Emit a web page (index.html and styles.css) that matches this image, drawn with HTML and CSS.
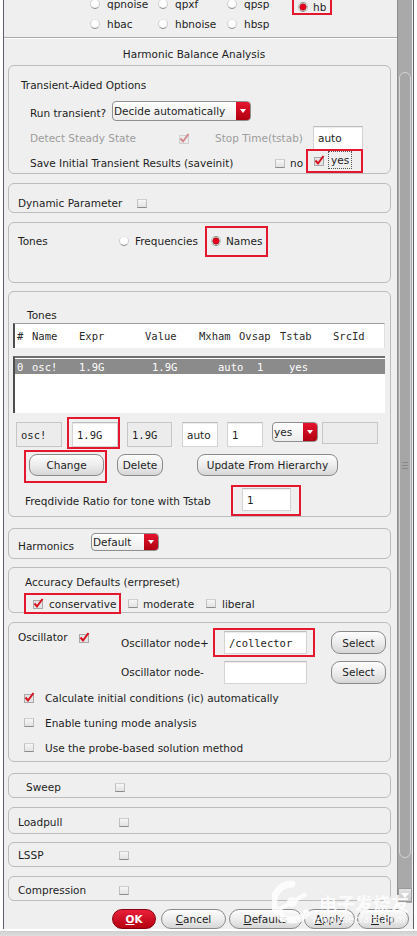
FILE: index.html
```html
<!DOCTYPE html>
<html>
<head>
<meta charset="utf-8">
<title>Harmonic Balance Analysis</title>
<link rel="stylesheet" href="styles.css">
</head>
<body>
<div class="window">
  <div class="main">
    <div class="content">
      <div class="mrow r1">
        <span class="mopt w1"><span class="rb"></span>qpnoise</span>
        <span class="mopt w2"><span class="rb"></span>qpxf</span>
        <span class="mopt w3"><span class="rb"></span>qpsp</span>
        <span class="mopt hl-hb"><span class="rb on"></span>hb</span>
      </div>
      <div class="mrow">
        <span class="mopt w1"><span class="rb"></span>hbac</span>
        <span class="mopt w2"><span class="rb"></span>hbnoise</span>
        <span class="mopt w3"><span class="rb"></span>hbsp</span>
      </div>
      <div class="sep"></div>
      <div class="title">Harmonic Balance Analysis</div>

      <section class="panel p-trans">
        <div class="ptitle">Transient-Aided Options</div>
        <div class="row run">
          <span class="lbl-run">Run transient?</span>
          <span class="dd dd-run"><span class="dd-text">Decide automatically</span><span class="dd-arrow"></span></span>
        </div>
        <div class="row detect">
          <span class="lbl-detect dis">Detect Steady State</span>
          <svg class="ck dimck" width="12" height="11" viewBox="0 0 12 11"><rect x="1.5" y="2.5" width="9" height="8" fill="#ececec" stroke="#d0d0d0"/><path d="M2.5 5.5L5 8.5L10.5 1" fill="none" stroke="#d28a8f" stroke-width="2"/></svg>
          <span class="lbl-stop dis">Stop Time(tstab)</span>
          <span class="fld f-auto">auto</span>
        </div>
        <div class="row save">
          <span class="lbl-save">Save Initial Transient Results (saveinit)</span>
          <span class="cb"></span>
          <span class="lbl-no">no</span>
          <span class="redbox rb-yes">
            <svg class="ck" width="12" height="11" viewBox="0 0 12 11"><rect x="1.5" y="2.5" width="9" height="8" fill="#e4e4e4" stroke="#a8a8a8"/><path d="M2.5 5.5L5 8.5L10.5 1" fill="none" stroke="#d8101e" stroke-width="2"/></svg>
            <span class="focus">yes</span>
          </span>
        </div>
      </section>

      <section class="panel p-dyn">
        <div class="row dyn">
          <span class="lbl-dyn">Dynamic Parameter</span>
          <span class="cb"></span>
        </div>
      </section>

      <section class="panel p-tones">
        <div class="row tones">
          <span class="lbl-tones">Tones</span>
          <span class="rb"></span>
          <span class="lbl-freq">Frequencies</span>
          <span class="redbox rb-names"><span class="rb on"></span><span class="lbl-names">Names</span></span>
        </div>
      </section>

      <section class="panel p-list">
        <div class="lbl-list">Tones</div>
        <div class="list head">
          <span class="c0">#</span><span class="c1">Name</span><span class="c2">Expr</span><span class="c3">Value</span><span class="c4">Mxham</span><span class="c5">Ovsap</span><span class="c6">Tstab</span><span class="c7">SrcId</span>
        </div>
        <div class="list body">
          <div class="sel">
            <span class="d0">0</span><span class="d1">osc!</span><span class="d2">1.9G</span><span class="d3">1.9G</span><span class="d4">auto</span><span class="d5">1</span><span class="d6">yes</span>
          </div>
        </div>
        <div class="row fields">
          <span class="fld disf mono f-name">osc!</span>
          <span class="redbox rb-expr"><span class="fld mono f-expr">1.9G</span></span>
          <span class="fld disf mono f-val">1.9G</span>
          <span class="fld f-mx">auto</span>
          <span class="fld f-ov">1</span>
          <span class="dd dd-yes"><span class="dd-text">yes</span><span class="dd-arrow"></span></span>
          <span class="fld disf f-src"></span>
        </div>
        <div class="row btns">
          <span class="redbox rb-change"><span class="btn b-change">Change</span></span>
          <span class="btn b-delete">Delete</span>
          <span class="btn b-update">Update From Hierarchy</span>
        </div>
        <div class="row freq">
          <span class="lbl-fd">Freqdivide Ratio for tone with Tstab</span>
          <span class="redbox rb-fd"><span class="fld f-fd">1</span></span>
        </div>
      </section>

      <section class="panel p-harm">
        <div class="row harm">
          <span class="lbl-harm">Harmonics</span>
          <span class="dd dd-harm"><span class="dd-text">Default</span><span class="dd-arrow"></span></span>
        </div>
      </section>

      <section class="panel p-acc">
        <div class="ptitle acc-title">Accuracy Defaults (errpreset)</div>
        <div class="row acc">
          <span class="redbox rb-cons">
            <svg class="ck" width="12" height="11" viewBox="0 0 12 11"><rect x="1.5" y="2.5" width="9" height="8" fill="#e4e4e4" stroke="#a8a8a8"/><path d="M2.5 5.5L5 8.5L10.5 1" fill="none" stroke="#d8101e" stroke-width="2"/></svg>
            <span class="lbl-cons">conservative</span>
          </span>
          <span class="cb cb-mod"></span><span class="lbl-mod">moderate</span>
          <span class="cb cb-lib"></span><span class="lbl-lib">liberal</span>
        </div>
      </section>

      <section class="panel p-osc">
        <div class="osc-top">
          <div class="osc-left">
            <span class="lbl-osc">Oscillator</span>
            <svg class="ck" width="12" height="11" viewBox="0 0 12 11"><rect x="1.5" y="2.5" width="9" height="8" fill="#e4e4e4" stroke="#a8a8a8"/><path d="M2.5 5.5L5 8.5L10.5 1" fill="none" stroke="#d8101e" stroke-width="2"/></svg>
          </div>
          <div class="osc-right">
            <div class="node n1">
              <span class="lbl-node">Oscillator node+</span>
              <span class="redbox rb-node"><span class="fld mono f-node">/collector</span></span>
              <span class="btn b-sel b-sel1">Select</span>
            </div>
            <div class="node n2">
              <span class="lbl-node">Oscillator node-</span>
              <span class="fld f-node f-node2"></span>
              <span class="btn b-sel b-sel2">Select</span>
            </div>
          </div>
        </div>
        <div class="crow">
          <span class="slot"><svg class="ck" width="12" height="11" viewBox="0 0 12 11"><rect x="1.5" y="2.5" width="9" height="8" fill="#e4e4e4" stroke="#a8a8a8"/><path d="M2.5 5.5L5 8.5L10.5 1" fill="none" stroke="#d8101e" stroke-width="2"/></svg></span>
          <span>Calculate initial conditions (ic) automatically</span>
        </div>
        <div class="crow">
          <span class="slot"><span class="cb"></span></span>
          <span>Enable tuning mode analysis</span>
        </div>
        <div class="crow">
          <span class="slot"><span class="cb"></span></span>
          <span>Use the probe-based solution method</span>
        </div>
      </section>

      <section class="panel p-small p-sweep">
        <div class="row srow"><span class="lbl-sweep">Sweep</span><span class="cb"></span></div>
      </section>
      <section class="panel p-small p-load">
        <div class="row srow"><span class="lbl-small">Loadpull</span><span class="cb"></span></div>
      </section>
      <section class="panel p-small p-lssp">
        <div class="row srow"><span class="lbl-small">LSSP</span><span class="cb"></span></div>
      </section>
      <section class="panel p-small p-comp">
        <div class="row srow"><span class="lbl-small">Compression</span><span class="cb"></span></div>
      </section>
    </div>
    <div class="scrollbar">
      <div class="sb-track-top"></div>
      <div class="sb-thumb"><span class="grip"></span></div>
      <div class="sb-track-bot"></div>
      <div class="sb-arrow"><span class="tri"></span></div>
    </div>
  </div>
  <div class="actions">
    <span class="btn abtn b-ok"><u>O</u>K</span>
    <span class="btn abtn b-cancel"><u>C</u>ancel</span>
    <span class="btn abtn b-def"><u>D</u>efaults</span>
    <span class="btn abtn b-apply"><u>A</u>pply</span>
    <span class="btn abtn b-help"><u>H</u>elp</span>
  </div>
</div>
<div class="footer"></div>
<div class="watermark">
  <svg class="wm-logo" width="40" height="44" viewBox="0 0 40 44"><path d="M20 4a18 18 0 1 0 14 29" fill="none" stroke="#fff" stroke-width="7" stroke-linecap="round"/><circle cx="20" cy="22" r="5" fill="#fff"/><path d="M6 30L34 14" stroke="#fff" stroke-width="4"/></svg>
  <span class="wm-cn">电子发烧友</span>
  <span class="wm-url">www.elecfans.com</span>
</div>
</body>
</html>
```

FILE: styles.css
```css
* { box-sizing: border-box; }
html, body { margin: 0; padding: 0; }
body {
  width: 417px; height: 936px; overflow: hidden; background: #fff;
  font-family: "DejaVu Sans", "Noto Sans", sans-serif; font-size: 10.5px; color: #1e1e1e;
  position: relative;
}
.window {
  margin-left: 3px; width: 411px; height: 929px;
  border-left: 1px solid #5d6068; border-right: 1px solid #5d6068;
  background: #efefef; display: flex; flex-direction: column;
}
.main { display: flex; height: 903px; overflow: hidden; }
.content { width: 393px; display: flex; flex-direction: column; }

/* mode radios */
.mrow { display: flex; height: 20px; align-items: center; padding-left: 86px; }
.mrow.r1 { margin-top: -6px; }
.mopt { display: inline-flex; align-items: center; gap: 7px; white-space: nowrap; }
.w1 { width: 68px; } .w2 { width: 69px; } .w3 { width: 65px; }
.hl-hb { border: 2px solid #e3172d; height: 17px; padding: 0 4px 0 4px; gap: 5px; align-self: flex-end; margin-bottom: -1px; }
.sep { margin-top: 3px; border-top: 1px solid #a9a9a9; border-bottom: 1px solid #fff; height: 2px; }
.title { margin-top: 5px; height: 20px; line-height: 20px; text-align: center; padding-right: 13px; }

/* radio & checkbox */
.rb {
  display: inline-block; width: 10px; height: 10px; border-radius: 50%; flex: none;
  background: radial-gradient(circle at 50% 35%, #ffffff 0 55%, #e9e9e9 80%);
  border: 1px solid; border-color: #e6e6e6 #cfcfcf #8e8e8e #cfcfcf;
}
.rb.on {
  background: radial-gradient(circle at 50% 50%, #e4001c 0 2.6px, #9a1a1a 3.2px, #d9d9d9 3.8px, #f4f4f4 5px);
  border-color: #9a9a9a #bdbdbd #8a8a8a #bdbdbd;
}
.cb {
  display: inline-block; width: 10px; height: 9px; flex: none;
  background: linear-gradient(#f6f6f6, #e2e2e2);
  border: 1px solid; border-color: #d0d0d0 #c0c0c0 #8c8c8c #c0c0c0;
}
.ck { display: block; flex: none; }

/* panels */
.panel {
  margin-left: 4px; width: 383px; border: 1px solid #bcbcbc; border-radius: 6px;
  background: #efefef; display: flex; flex-direction: column; flex: none;
}
.row { display: flex; align-items: center; white-space: nowrap; }
.ptitle { padding-left: 12px; height: 20px; line-height: 20px; margin-top: 9px; }
.dis { color: #9d9d9d; }

.p-trans { margin-top: 1px; height: 109px; }
.run { margin-top: 4px; height: 24px; padding-left: 21px; }
.lbl-run { width: 82px; padding-top: 3px; }
.detect { height: 30px; padding-left: 21px; }
.lbl-detect { width: 148px; }
.dimck { margin-right: 25px; }
.lbl-stop { width: 98px; }
.f-auto { width: 50px; height: 26px; }
.save { height: 20px; padding-left: 21px; }
.lbl-save { width: 245px; }
.lbl-no { width: 16px; margin-left: 5px; }
.redbox { border: 2px solid #e3172d; display: inline-flex; align-items: center; flex: none; }
.rb-yes { align-self: flex-end; height: 24px; padding: 0 9px 2px 5px; gap: 3px; }
.focus { border: 1px dotted #555; padding: 0 2px; height: 18px; line-height: 17px; }

.p-dyn { margin-top: 9px; height: 30px; }
.dyn { margin-top: 10px; height: 18px; padding-left: 9px; }
.lbl-dyn { width: 119px; }

.p-tones { margin-top: 9px; height: 61px; }
.tones { margin-top: 9px; height: 18px; padding-left: 9px; }
.lbl-tones { width: 101px; }
.lbl-freq { margin-left: 6px; width: 65px; }
.rb-names { margin-left: 5px; height: 31px; padding: 0 4px 0 4px; gap: 5px; }
.rb-names .rb { margin-left: 0; }

/* tone list */
.p-list { margin-top: 8px; height: 226px; }
.lbl-list { margin-top: 15px; height: 16px; line-height: 16px; padding-left: 18px; }
.list {
  margin-left: 4px; width: 372px; background: #fff;
  border-left: 2px solid #4e4e4e; font-family: "DejaVu Sans Mono", "Liberation Mono", monospace; font-size: 10.5px;
}
.head { height: 25px; border-top: 1px solid #9c9c9c; border-right: 1px solid #e0e0e0; display: flex; align-items: center; padding-left: 2px; padding-bottom: 1px; color: #2a2a2a; }
.c0 { width: 15px; } .c1 { width: 47px; } .c2 { width: 66px; } .c3 { width: 54px; }
.c4 { width: 40px; } .c5 { width: 41px; } .c6 { width: 53px; } .c7 { width: 40px; }
.body { margin-top: 8px; height: 57px; border-top: 2px solid #6e6e6e; }
.sel { height: 15px; margin-top: 1px; background: #8b8b8b; color: #fff; display: flex; align-items: center; padding-left: 2px; }
.d0 { width: 15px; } .d1 { width: 47px; } .d2 { width: 73px; } .d3 { width: 66px; }
.d4 { width: 39px; } .d5 { width: 32px; } .d6 { width: 30px; }

.fld {
  display: inline-flex; align-items: center; flex: none; height: 25px; background: #fff;
  border: 1px solid #d4d4d4; border-top-color: #bdbdbd; padding-left: 4px;
  box-shadow: inset 0 1px 1px #ececec;
}
.disf { background: #ececec; border-color: #c6c6c6; box-shadow: none; }
.mono { font-family: "DejaVu Sans Mono", "Liberation Mono", monospace; font-size: 10.5px; }
.fields { margin-top: 4px; height: 32px; align-items: flex-start; }
.fields > .fld, .fields > .dd { margin-top: 5px; }
.f-name { margin-left: 7px; width: 46px; }
.rb-expr { margin-left: 5px; height: 32px; padding: 3px 0 0 3px; align-items: flex-start; }
.f-expr { width: 46px; }
.f-val { margin-left: 7px; width: 45px; }
.f-mx { margin-left: 10px; width: 36px; }
.f-ov { margin-left: 9px; width: 36px; }
.dd-yes { margin-left: 9px; width: 46px; height: 22px; }
.f-src { margin-left: 4px; width: 56px; height: 22px; }

.btns { margin-top: 1px; height: 33px; align-items: flex-start; }
.rb-change { margin-left: 15px; height: 33px; padding: 2px 1px 0 3px; align-items: flex-start; }
.b-change { width: 75px; }
.b-delete { margin-left: 10px; width: 46px; margin-top: 4px; }
.b-update { margin-left: 34px; width: 141px; margin-top: 4px; }
.freq { margin-top: 2px; height: 31px; padding-left: 16px; }
.lbl-fd { width: 206px; }
.rb-fd { height: 31px; padding: 1px 8px 3px 9px; }
.f-fd { width: 49px; height: 23px; }

/* dropdown */
.dd {
  display: inline-flex; flex: none; height: 20px; border: 1px solid #8f8f8f; border-radius: 4px;
  background: linear-gradient(#ffffff, #ececec); overflow: hidden;
}
.dd-text { flex: 1; padding-left: 1px; display: flex; align-items: center; font-size: 10.5px; }
.dd-arrow {
  width: 14px; flex: none; background: linear-gradient(#e5142e, #b0000f);
  display: flex; align-items: center; justify-content: center;
}
.dd-arrow::after { content: ""; border-left: 3px solid transparent; border-right: 3px solid transparent; border-top: 4px solid #fff; }
.dd-run { width: 139px; }

/* buttons */
.btn {
  display: inline-flex; align-items: center; justify-content: center; flex: none; height: 22px;
  border: 1px solid #8a8a8a; border-radius: 8px;
  background: linear-gradient(#fdfdfd, #ebebeb 55%, #d6d6d6);
  white-space: nowrap;
}

.p-harm { margin-top: 11px; height: 31px; }
.harm { margin-top: 4px; height: 18px; align-items: flex-start; padding-left: 9px; }
.lbl-harm { width: 73px; padding-top: 7px; line-height: 13px; }
.dd-harm { width: 68px; height: 18px; }

.p-acc { margin-top: 8px; height: 46px; }
.acc-title { margin-top: 7px; height: 14px; line-height: 14px; padding-left: 16px; }
.acc { margin-top: 4px; height: 21px; }
.rb-cons { margin-left: 15px; height: 21px; padding: 0 3px 0 6px; gap: 5px; }
.lbl-cons { width: 67px; }
.cb-mod { margin-left: 7px; }
.lbl-mod { margin-left: 5px; width: 63px; }
.lbl-lib { margin-left: 6px; }

.p-osc { margin-top: 9px; height: 140px; }
.osc-top { display: flex; margin-top: 5px; padding-left: 9px; }
.osc-left { width: 103px; display: flex; align-items: center; height: 14px; margin-top: 2px; }
.lbl-osc { width: 60px; }
.node { display: flex; align-items: center; }
.n1 { height: 29px; }
.n2 { height: 24px; margin-top: 3px; }
.lbl-node { width: 92px; }
.rb-node { height: 29px; padding: 1px 6px 1px 9px; }
.f-node { width: 83px; height: 23px; }
.f-node2 { margin-left: 11px; }
.b-sel { width: 55px; height: 23px; border-radius: 9px; }
.b-sel1 { margin-left: 16px; }
.b-sel2 { margin-left: 24px; }
.crow { display: flex; align-items: center; height: 25px; padding-left: 14px; white-space: nowrap; }
.crow:first-of-type { margin-top: 1px; }
.osc-top + .crow { margin-top: 1px; }
.slot { width: 22px; display: flex; align-items: center; }
.slot .cb { margin-left: 1px; }

.p-small { height: 25px; }
.srow { height: 18px; }
.p-sweep { margin-top: 11px; }
.p-sweep .srow { margin-top: 4px; padding-left: 17px; }
.lbl-sweep { width: 89px; }
.lbl-small { width: 101px; }
.p-load { margin-top: 9px; height: 27px; }
.p-load .srow { margin-top: 5px; padding-left: 9px; }
.p-lssp { margin-top: 8px; }
.p-lssp .srow { margin-top: 3px; padding-left: 9px; }
.p-comp { margin-top: 9px; }
.p-comp .srow { margin-top: 4px; padding-left: 9px; }

/* scrollbar */
.scrollbar { width: 15px; display: flex; flex-direction: column; border-left: 1px solid #8e8e8e; background: #a9a9a9; }
.sb-track-top { height: 72px; background: #a9a9a9; }
.sb-thumb {
  height: 786px; margin: 0 1px; border-radius: 7px; background: #a6a6a6;
  border: 1px solid #d4d4d4; display: flex; align-items: center; justify-content: center;
}
.grip { width: 6px; height: 7px; border-top: 1px solid #8a8a8a; border-bottom: 1px solid #8a8a8a; background: linear-gradient(transparent 2px, #8a8a8a 2px, #8a8a8a 3px, transparent 3px); }
.sb-track-bot { height: 30px; background: #a9a9a9; }
.sb-arrow { height: 14px; background: linear-gradient(#e4e4e4, #c8c8c8); border: 1px solid #9a9a9a; display: flex; align-items: center; justify-content: center; }
.tri { border-left: 4px solid transparent; border-right: 4px solid transparent; border-top: 5px solid #fff; }

/* action buttons */
.actions { display: flex; margin-top: 6px; height: 20px; }
.abtn { height: 20px; border-radius: 10px; font-size: 10.5px; }
.b-ok { margin-left: 108px; width: 44px; background: linear-gradient(#e8213a, #b5000f); border-color: #8a0010; color: #fff; font-weight: bold; }
.b-cancel { margin-left: 5px; width: 65px; }
.b-def { margin-left: 3px; width: 73px; }
.b-apply { margin-left: 2px; width: 51px; }
.b-help { margin-left: 2px; width: 52px; }

.footer { height: 7px; border-top: 2px solid #fff; background: linear-gradient(#cfcfcf, #dedede); }

/* watermark overlay */
.watermark { position: absolute; left: 272px; top: 878px; width: 145px; height: 50px; opacity: 0.85; pointer-events: none; }
.wm-logo { position: absolute; left: 0; top: 2px; }
.wm-cn { position: absolute; left: 47px; top: 12px; font-family: "Noto Sans CJK SC", sans-serif; font-size: 18px; color: #fff; font-weight: bold; letter-spacing: 0px; }
.wm-url { position: absolute; left: 40px; top: 36px; font-family: "DejaVu Sans", sans-serif; font-size: 10px; color: #fff; }
```
